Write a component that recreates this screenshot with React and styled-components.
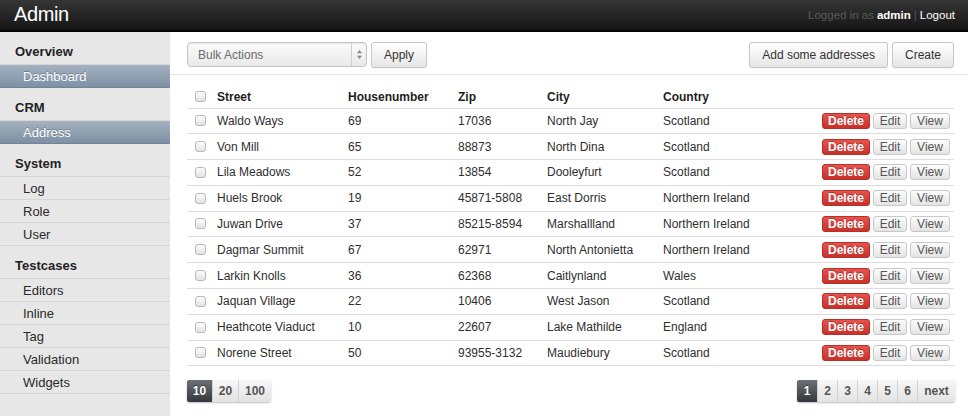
import React from 'react';
import styled, { createGlobalStyle, css } from 'styled-components';

const GlobalStyle = createGlobalStyle`
  html, body {
    margin: 0;
    padding: 0;
    background: #fff;
  }
  body {
    font-family: "Liberation Sans", Arial, Helvetica, sans-serif;
    font-size: 12px;
    color: #333;
  }
  * { box-sizing: border-box; }
`;

const Page = styled.div`
  width: 968px;
  height: 416px;
  display: flex;
  flex-direction: column;
  overflow: hidden;
`;

const TopBar = styled.header`
  height: 32px;
  flex: none;
  display: flex;
  align-items: center;
  justify-content: space-between;
  padding: 0 13px 0 14px;
  background: linear-gradient(#353535, #161616);
  border-bottom: 2px solid #050505;
`;

const Brand = styled.div`
  color: #fff;
  font-size: 20px;
  letter-spacing: -0.4px;
  margin-top: -1px;
`;

const UserInfo = styled.div`
  font-size: 11.5px;
  color: #5a5a5a;
  display: flex;
  align-items: center;
  gap: 2px;
  b { color: #fff; margin-left: 1px; }
  a { color: #fff; text-decoration: none; }
  span.sep { color: #555; margin: 0 1px; }
`;

const Body = styled.div`
  flex: 1;
  display: flex;
  min-height: 0;
`;

const Sidebar = styled.nav`
  width: 170px;
  flex: none;
  background: #e7e7e7;
  display: flex;
  flex-direction: column;
`;

const SectionTitle = styled.div`
  height: 33px;
  padding: 12px 0 0 15px;
  font-size: 13px;
  font-weight: bold;
  color: #222;
  border-bottom: 1px solid #d5d5d5;
`;

const NavItem = styled.div`
  height: 23px;
  display: flex;
  align-items: center;
  padding-left: 23px;
  font-size: 13px;
  color: #2a2a2a;
  border-bottom: 1px solid #d5d5d5;
  ${(p) =>
    p.$active &&
    css`
      background: linear-gradient(#a4b2c1, #7e90a4);
      color: #fff;
      border-bottom-color: #71839a;
      text-shadow: 0 -1px 0 rgba(0, 0, 0, 0.25);
    `}
`;

const Main = styled.main`
  flex: 1;
  display: flex;
  flex-direction: column;
  min-width: 0;
`;

const Toolbar = styled.div`
  height: 43px;
  flex: none;
  display: flex;
  align-items: flex-start;
  justify-content: space-between;
  padding: 10px 14px 0 17px;
  border-bottom: 1px solid #e6e6e6;
`;

const Group = styled.div`
  display: flex;
  gap: 4px;
`;

const Select = styled.div`
  width: 180px;
  height: 25px;
  display: flex;
  align-items: stretch;
  border: 1px solid #c4c4c4;
  border-radius: 4px;
  background: linear-gradient(#fbfbfb, #e9e9e9);
  box-shadow: inset 0 1px 1px rgba(0, 0, 0, 0.08);
  color: #6a6a6a;
  font-size: 12px;
`;

const SelectLabel = styled.div`
  flex: 1;
  display: flex;
  align-items: center;
  padding-left: 10px;
`;

const SelectArrow = styled.div`
  width: 15px;
  border-left: 1px solid #d0d0d0;
  display: flex;
  align-items: center;
  justify-content: center;
`;

const Button = styled.button`
  height: 26px;
  padding: 0 12px;
  font-family: inherit;
  font-size: 12px;
  color: #333;
  border: 1px solid #c6c6c6;
  border-radius: 3px;
  background: linear-gradient(#ffffff, #e6e6e6);
  box-shadow: 0 1px 1px rgba(0, 0, 0, 0.05);
  cursor: pointer;
`;

const TableWrap = styled.div`
  padding: 11px 14px 0 17px;
`;

const Table = styled.table`
  width: 100%;
  border-collapse: collapse;
  table-layout: fixed;
`;

const Th = styled.th`
  text-align: left;
  font-weight: bold;
  color: #1e1e1e;
  font-size: 12px;
  height: 22px;
  padding: 0 0 0 ${(p) => p.$pad ?? 7}px;
  border-bottom: 1px solid #dcdcdc;
`;

const Td = styled.td`
  height: 25.8px;
  padding: 0 0 0 ${(p) => p.$pad ?? 7}px;
  border-bottom: 1px solid #dcdcdc;
  color: #2e2e2e;
  font-size: 12px;
  text-align: ${(p) => p.$align || 'left'};
  white-space: nowrap;
  padding-right: ${(p) => (p.$align === 'right' ? 4 : 0)}px;
`;

const Check = styled.span`
  display: inline-block;
  width: 11px;
  height: 11px;
  vertical-align: middle;
  border: 1px solid #b9b9b9;
  border-radius: 3px;
  background: linear-gradient(#fdfdfd, #e2e2e2);
  margin-top: -2px;
`;

const Actions = styled.div`
  display: inline-flex;
  gap: 3px;
  vertical-align: middle;
`;

const SmallBtn = styled.span`
  display: inline-flex;
  align-items: center;
  justify-content: center;
  height: 16px;
  min-width: ${(p) => p.$w}px;
  font-size: 12px;
  border-radius: 3px;
  border: 1px solid #c8c8c8;
  background: linear-gradient(#fdfdfd, #e4e4e4);
  color: #555;
  ${(p) =>
    p.$danger &&
    css`
      border-color: #b8302a;
      background: linear-gradient(#e9534d, #c8302a);
      color: #fff;
      font-weight: bold;
      text-shadow: 0 -1px 0 rgba(0, 0, 0, 0.3);
    `}
`;

const Footer = styled.div`
  display: flex;
  justify-content: space-between;
  align-items: center;
  padding: 14px 13px 0 17px;
`;

const Pager = styled.div`
  display: flex;
  height: 22px;
  border-radius: 2px;
  box-shadow: 0 1px 2px rgba(0, 0, 0, 0.25);
  overflow: hidden;
`;

const PageBtn = styled.span`
  min-width: ${(p) => p.$w || 20}px;
  display: flex;
  align-items: center;
  justify-content: center;
  font-size: 12px;
  font-weight: bold;
  color: #555;
  background: linear-gradient(#f7f7f7, #e2e2e2);
  border-left: 1px solid #d2d2d2;
  &:first-child { border-left: none; }
  ${(p) =>
    p.$active &&
    css`
      background: linear-gradient(#6d7176, #34383c);
      color: #fff;
      text-shadow: 0 -1px 0 rgba(0, 0, 0, 0.4);
    `}
`;

const nav = [
  { title: 'Overview', items: [{ label: 'Dashboard', active: true }] },
  { title: 'CRM', items: [{ label: 'Address', active: true }] },
  { title: 'System', items: [{ label: 'Log' }, { label: 'Role' }, { label: 'User' }] },
  {
    title: 'Testcases',
    items: [{ label: 'Editors' }, { label: 'Inline' }, { label: 'Tag' }, { label: 'Validation' }, { label: 'Widgets' }],
  },
];

const rows = [
  ['Waldo Ways', '69', '17036', 'North Jay', 'Scotland'],
  ['Von Mill', '65', '88873', 'North Dina', 'Scotland'],
  ['Lila Meadows', '52', '13854', 'Dooleyfurt', 'Scotland'],
  ['Huels Brook', '19', '45871-5808', 'East Dorris', 'Northern Ireland'],
  ['Juwan Drive', '37', '85215-8594', 'Marshallland', 'Northern Ireland'],
  ['Dagmar Summit', '67', '62971', 'North Antonietta', 'Northern Ireland'],
  ['Larkin Knolls', '36', '62368', 'Caitlynland', 'Wales'],
  ['Jaquan Village', '22', '10406', 'West Jason', 'Scotland'],
  ['Heathcote Viaduct', '10', '22607', 'Lake Mathilde', 'England'],
  ['Norene Street', '50', '93955-3132', 'Maudiebury', 'Scotland'],
];

const SortIcon = () => (
  <svg width="7" height="11" viewBox="0 0 7 11">
    <path d="M3.5 1 L6 4.2 H1 Z" fill="#888" />
    <path d="M3.5 10 L6 6.8 H1 Z" fill="#888" />
  </svg>
);

export default function App() {
  return (
    <Page>
      <GlobalStyle />
      <TopBar>
        <Brand>Admin</Brand>
        <UserInfo>
          <span>Logged in as</span>
          <b>admin</b>
          <span className="sep">|</span>
          <a href="#">Logout</a>
        </UserInfo>
      </TopBar>
      <Body>
        <Sidebar>
          {nav.map((section) => (
            <React.Fragment key={section.title}>
              <SectionTitle>{section.title}</SectionTitle>
              {section.items.map((item) => (
                <NavItem key={item.label} $active={item.active}>
                  {item.label}
                </NavItem>
              ))}
            </React.Fragment>
          ))}
        </Sidebar>
        <Main>
          <Toolbar>
            <Group>
              <Select>
                <SelectLabel>Bulk Actions</SelectLabel>
                <SelectArrow>
                  <SortIcon />
                </SelectArrow>
              </Select>
              <Button>Apply</Button>
            </Group>
            <Group>
              <Button>Add some addresses</Button>
              <Button>Create</Button>
            </Group>
          </Toolbar>
          <TableWrap>
            <Table>
              <colgroup>
                <col style={{ width: 23 }} />
                <col style={{ width: 131 }} />
                <col style={{ width: 110 }} />
                <col style={{ width: 89 }} />
                <col style={{ width: 116 }} />
                <col style={{ width: 130 }} />
                <col />
              </colgroup>
              <thead>
                <tr>
                  <Th $pad={8}>
                    <Check />
                  </Th>
                  <Th>Street</Th>
                  <Th>Housenumber</Th>
                  <Th>Zip</Th>
                  <Th>City</Th>
                  <Th>Country</Th>
                  <Th />
                </tr>
              </thead>
              <tbody>
                {rows.map((r) => (
                  <tr key={r[0]}>
                    <Td $pad={8}>
                      <Check />
                    </Td>
                    {r.map((c, i) => (
                      <Td key={i}>{c}</Td>
                    ))}
                    <Td $align="right">
                      <Actions>
                        <SmallBtn $danger $w={48}>Delete</SmallBtn>
                        <SmallBtn $w={34}>Edit</SmallBtn>
                        <SmallBtn $w={40}>View</SmallBtn>
                      </Actions>
                    </Td>
                  </tr>
                ))}
              </tbody>
            </Table>
          </TableWrap>
          <Footer>
            <Pager>
              <PageBtn $active $w={25}>10</PageBtn>
              <PageBtn $w={26}>20</PageBtn>
              <PageBtn $w={33}>100</PageBtn>
            </Pager>
            <Pager>
              <PageBtn $active>1</PageBtn>
              <PageBtn>2</PageBtn>
              <PageBtn>3</PageBtn>
              <PageBtn>4</PageBtn>
              <PageBtn>5</PageBtn>
              <PageBtn>6</PageBtn>
              <PageBtn $w={38}>next</PageBtn>
            </Pager>
          </Footer>
        </Main>
      </Body>
    </Page>
  );
}
